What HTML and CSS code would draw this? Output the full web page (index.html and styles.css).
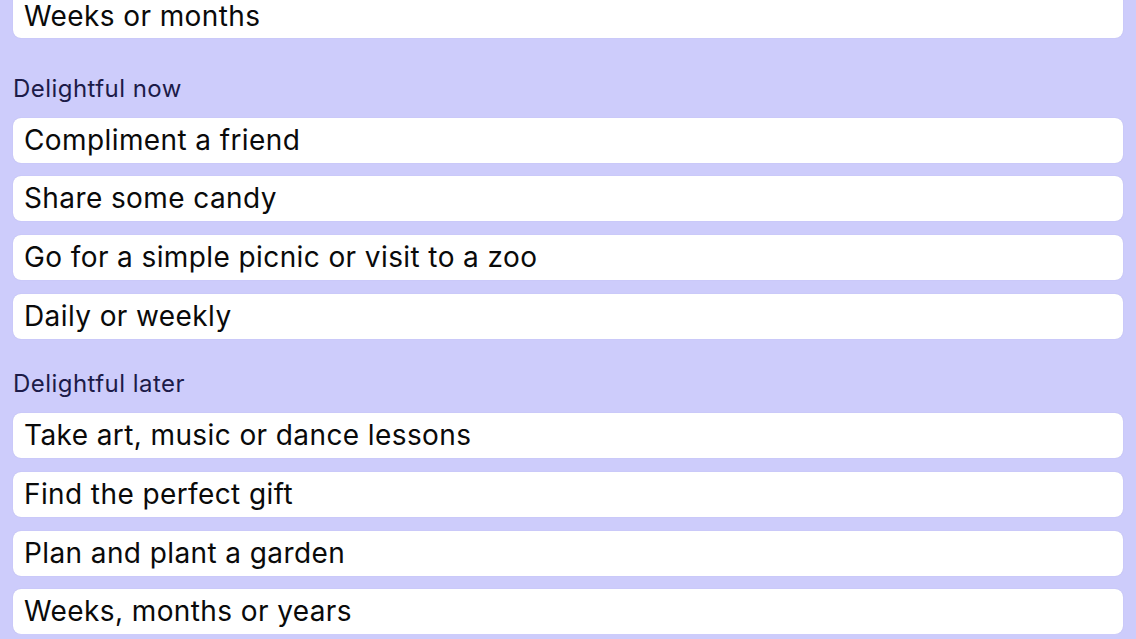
FILE: index.html
```html
<!DOCTYPE html>
<html lang="en">
<head>
    <meta charset="UTF-8">
    <meta name="viewport" content="width=device-width, initial-scale=1.0">
    <title>Delightful</title>
    <link rel="stylesheet" href="styles.css">
</head>
<body>
    <div class="list">
        <div class="section first">
            <div class="item">Weeks or months</div>
        </div>

        <div class="section now">
            <h2 class="section-title">Delightful now</h2>
            <div class="item">Compliment a friend</div>
            <div class="item">Share some candy</div>
            <div class="item">Go for a simple picnic or visit to a zoo</div>
            <div class="item">Daily or weekly</div>
        </div>

        <div class="section later">
            <h2 class="section-title">Delightful later</h2>
            <div class="item">Take art, music or dance lessons</div>
            <div class="item">Find the perfect gift</div>
            <div class="item">Plan and plant a garden</div>
            <div class="item">Weeks, months or years</div>
        </div>
    </div>
</body>
</html>
```

FILE: styles.css
```css
body {
    font-family: Inter, "Noto Sans", sans-serif;
    background-color: #cdccfb;
    margin: 0;
    padding: 0;
    overflow: hidden;
}

.list {
    padding: 0 13px;
    margin-top: -6.7px;
}

.section {
    display: flex;
    flex-direction: column;
    gap: 13.7px;
}

.section.first .item {
    padding-top: 1px;
}

.section.now {
    margin-top: 35.7px;
}

.section.later {
    margin-top: 30.7px;
}

.section-title {
    font-size: 24px;
    font-weight: 400;
    letter-spacing: 0.45px;
    color: #1c1b48;
    margin: 0;
    height: 30px;
    line-height: 30px;
}

.item {
    background-color: #fff;
    border-radius: 8px;
    height: 45px;
    box-sizing: border-box;
    padding: 0 11px 1px;
    line-height: 44px;
    font-size: 28px;
    letter-spacing: 0.4px;
    color: #0a0a0a;
    box-shadow: 0 0 1px rgba(80, 80, 160, 0.25);
}
```
